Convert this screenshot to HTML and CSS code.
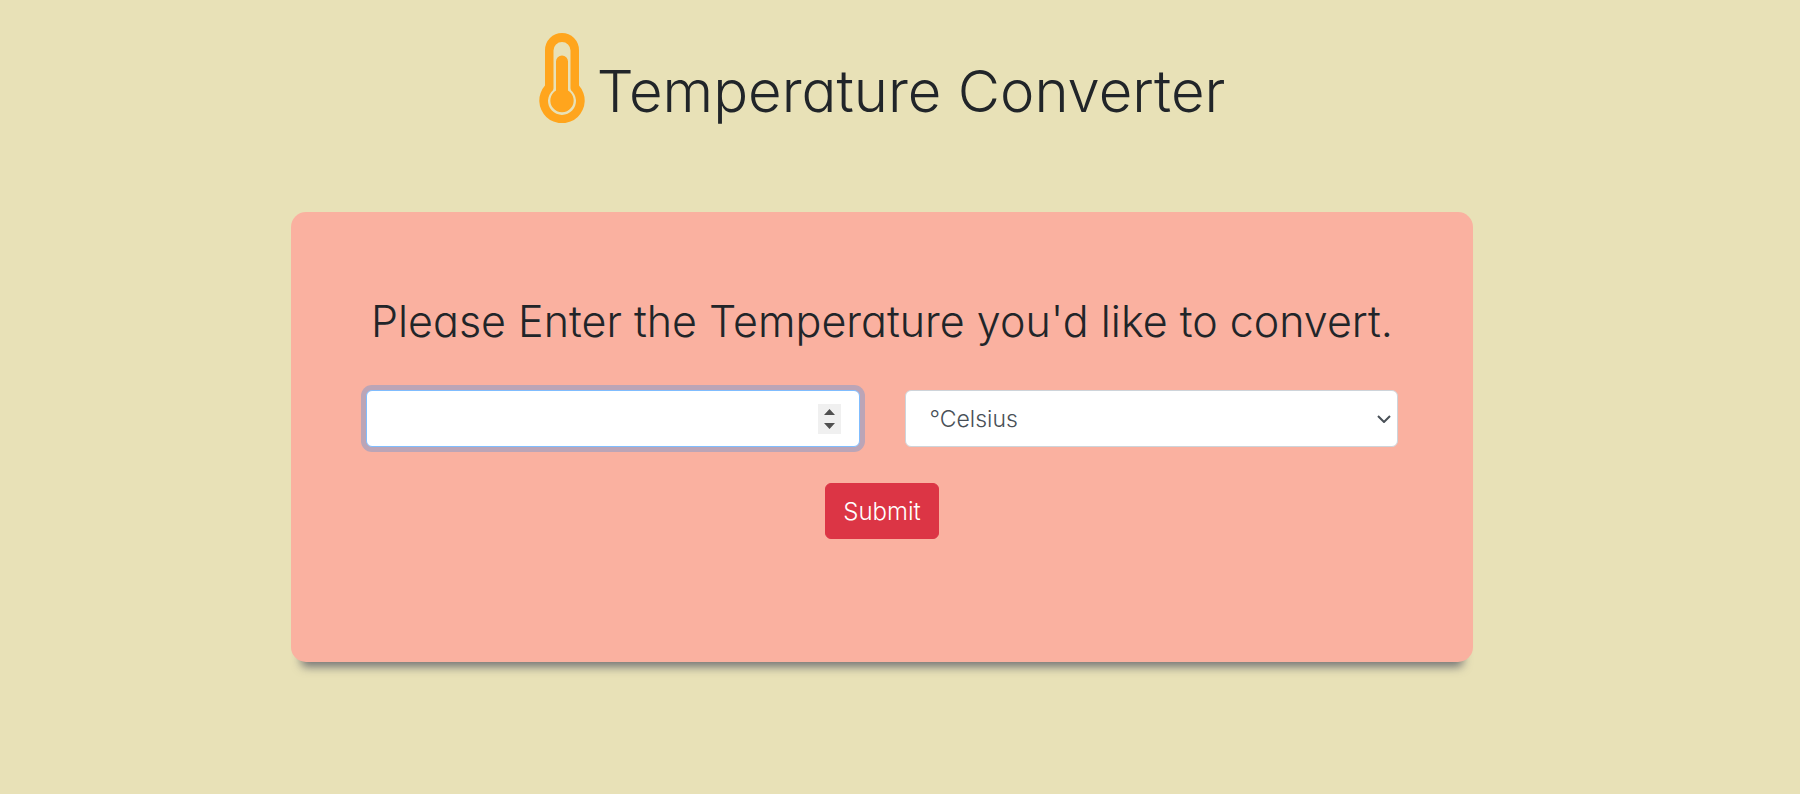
FILE: index.html
```html
<!DOCTYPE html>
<html lang="en">
<head>
<meta charset="utf-8">
<meta name="viewport" content="width=device-width, initial-scale=1">
<title>Temperature Converter</title>
<link rel="stylesheet" href="styles.css">
</head>
<body class="page">
<main class="container">
  <h1 class="title">
    <svg class="title-icon" viewBox="0 0 46 90" aria-hidden="true">
      <path fill="#ffa51d" fill-rule="evenodd" d="M6 17a17 17 0 0 1 34 0V52.500A22.700 22.700 0 1 1 6 52.500ZM14.500 17.500V55.200L14 57.200A14 14 0 1 0 32 57.200L31.500 55.200V17.500a8.500 8.500 0 0 0-17 0Z"/>
      <path fill="#ffa51d" d="M17 28.500a6 6 0 0 1 12 0V57.500A11.700 11.700 0 1 1 17 57.500Z"/>
    </svg>
    <span>Temperature Converter</span>
  </h1>
  <form class="card">
    <h2 class="prompt">Please Enter the Temperature you'd like to convert.</h2>
    <div class="fields">
      <input class="control control-number" type="number" aria-label="Temperature" autofocus>
      <select class="control control-unit" aria-label="Unit">
        <option>°Celsius</option>
        <option>°Fahrenheit</option>
      </select>
    </div>
    <button class="submit" type="submit">Submit</button>
  </form>
</main>
</body>
</html>
```
FILE: styles.css
```css
* { box-sizing: border-box; }

.page {
  min-height: 100vh;
  margin: 0 2% 0 0;
  background: #e8e1b7;
  color: #212529;
  font-family: Inter, Lato, sans-serif;
  font-feature-settings: "cv11";
  font-weight: 300;
}

.container {
  width: 67%;
  margin: 0 auto;
  padding-top: 33px;
}

.title {
  display: flex;
  justify-content: center;
  align-items: flex-end;
  gap: 12px;
  margin: 0 0 89px;
  font-size: 58px;
  font-weight: 300;
  line-height: 64px;
}

.title-icon { width: 46px; height: 90px; }

.card {
  display: flex;
  flex-direction: column;
  align-items: center;
  padding: 80px 75px 123px;
  border-radius: 15px;
  background: #fab1a0;
  box-shadow: 0 15px 10px -10px #777;
}

.prompt {
  margin: 0 0 40px;
  font-size: 43px;
  font-weight: 300;
  line-height: 58px;
  text-align: center;
}

.fields {
  display: grid;
  grid-template-columns: 1fr 1fr;
  gap: 45px;
  width: 100%;
  margin-bottom: 36px;
}

.control {
  width: 100%;
  height: 57px;
  padding: 8px 18px;
  border: 1px solid #ced4da;
  border-radius: 6px;
  background: #fff;
  color: #495057;
  font: inherit;
  font-feature-settings: inherit;
  font-size: 23px;
}

.control-number { caret-color: transparent; }

.control-number:focus {
  border-color: #80bdff;
  outline: 0;
  box-shadow: 0 0 0 5px rgba(123, 154, 205, .5);
}

.control-number::-webkit-inner-spin-button {
  appearance: none;
  width: 23px;
  height: 30px;
  opacity: 1;
  background: #f0f0f0 url("data:image/svg+xml,%3Csvg xmlns='http://www.w3.org/2000/svg' viewBox='0 0 23 30'%3E%3Cpath fill='%23505050' d='M6 11L11.500 5L17 11ZM6 19H17L11.500 25Z'/%3E%3C/svg%3E");
}

.control-unit {
  appearance: none;
  padding: 8px 30px 8px 24px;
  background: #fff url("data:image/svg+xml,%3Csvg xmlns='http://www.w3.org/2000/svg' viewBox='0 0 14 8'%3E%3Cpath fill='none' stroke='%23495057' stroke-width='2' d='M1 1L7 7L13 1'/%3E%3C/svg%3E") no-repeat right 6px center / 14px 8px;
}

.submit {
  padding: 13px 17px 11px;
  border: 1px solid #dc3545;
  border-radius: 6px;
  background: #dc3545;
  color: #fff;
  font: inherit;
  font-size: 24px;
  line-height: 30px;
}
```
